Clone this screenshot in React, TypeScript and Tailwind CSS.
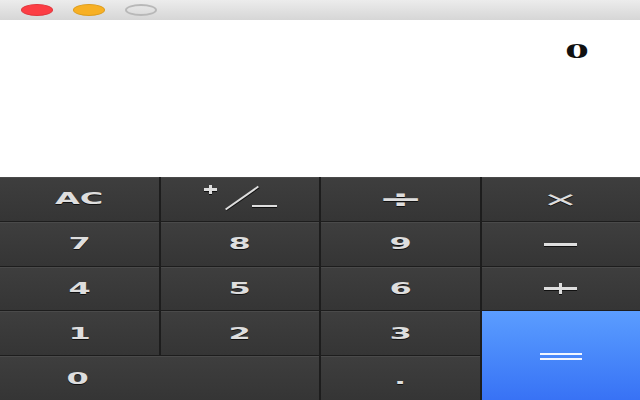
import type { ReactNode } from 'react'

const keyFont = { fontFamily: '"DejaVu Sans", "Liberation Sans", sans-serif' }

const Key = ({ children, className = '' }: { children: ReactNode; className?: string }) => (
  <div
    className={`flex items-center justify-center bg-gradient-to-b from-[#3e3e3e] to-[#353535] border-t border-[#4a4a4a] text-[#dedede] font-bold text-[16px] [text-shadow:0_1px_0_#111] ${className}`}
    style={keyFont}
  >
    {children}
  </div>
)

const Wide = ({ children }: { children: ReactNode }) => (
  <span className="inline-block scale-x-200">{children}</span>
)

const Bar = ({ className }: { className: string }) => (
  <span className={`absolute bg-[#dedede] shadow-[0_1px_0_#111] ${className}`} />
)

export default function App() {
  return (
    <div className="w-[640px] h-[400px] flex flex-col bg-white overflow-hidden">
      {/* title bar */}
      <div className="h-5 flex items-center gap-5 pl-[21px] bg-gradient-to-b from-[#ececec] to-[#d6d6d6]">
        <div className="w-8 h-3 rounded-[50%] bg-[#fc3d44] border border-[#e0353b]" />
        <div className="w-8 h-3 rounded-[50%] bg-[#f7b024] border border-[#dc9c1c]" />
        <div className="w-8 h-3 rounded-[50%] border-2 border-[#b8b8b8]" />
      </div>

      {/* display */}
      <div className="h-[157px] flex justify-end items-start pt-[21px] pr-[58px]">
        <span
          className="inline-block scale-x-[2.4] text-[20px] font-bold text-[#111] leading-none"
          style={{ fontFamily: '"Liberation Serif", serif' }}
        >
          0
        </span>
      </div>

      {/* keypad */}
      <div className="flex-1 grid grid-cols-4 grid-rows-5 gap-x-[2px] gap-y-px bg-[#1d1d1d]">
        <Key><Wide>AC</Wide></Key>
        <Key>
          <span className="relative block h-6 w-[76px]" aria-label="+/-">
            <Bar className="left-[2px] top-[1px] w-[13px] h-[3px]" />
            <Bar className="left-[7px] top-[-2px] w-[3px] h-[9px]" />
            <span className="absolute left-[20px] top-[10px] block w-[40px] h-[2px] bg-[#dedede] -rotate-[35deg] shadow-[0_1px_0_#111]" />
            <Bar className="left-[50px] top-[18px] w-[25px] h-[2px]" />
          </span>
        </Key>
        <Key><span className="inline-block scale-x-[2.4] text-[23px] font-bold leading-none">÷</span></Key>
        <Key><span className="inline-block scale-x-[2.2] text-[20px] font-normal leading-none">×</span></Key>

        <Key><Wide>7</Wide></Key>
        <Key><Wide>8</Wide></Key>
        <Key><Wide>9</Wide></Key>
        <Key>
          <span className="relative block w-[33px] h-[3px]">
            <Bar className="inset-0" />
          </span>
        </Key>

        <Key><Wide>4</Wide></Key>
        <Key><Wide>5</Wide></Key>
        <Key><Wide>6</Wide></Key>
        <Key>
          <span className="relative block w-[33px] h-[11px]">
            <Bar className="left-0 top-[4px] w-[33px] h-[3px]" />
            <Bar className="left-[15px] top-0 w-[3px] h-[11px]" />
          </span>
        </Key>

        <Key><Wide>1</Wide></Key>
        <Key><Wide>2</Wide></Key>
        <Key><Wide>3</Wide></Key>
        <div className="row-span-2 flex items-center justify-center bg-gradient-to-b from-[#5b9dff] to-[#3872f5]">
          <span className="flex flex-col gap-[3px] pt-[2px]">
            <span className="block w-[42px] h-[2px] bg-[#f2f6ff]" />
            <span className="block w-[42px] h-[2px] bg-[#f2f6ff]" />
          </span>
        </div>

        <Key className="col-span-2 justify-start pl-[72px]"><Wide>0</Wide></Key>
        <Key><Wide>.</Wide></Key>
      </div>
    </div>
  )
}
